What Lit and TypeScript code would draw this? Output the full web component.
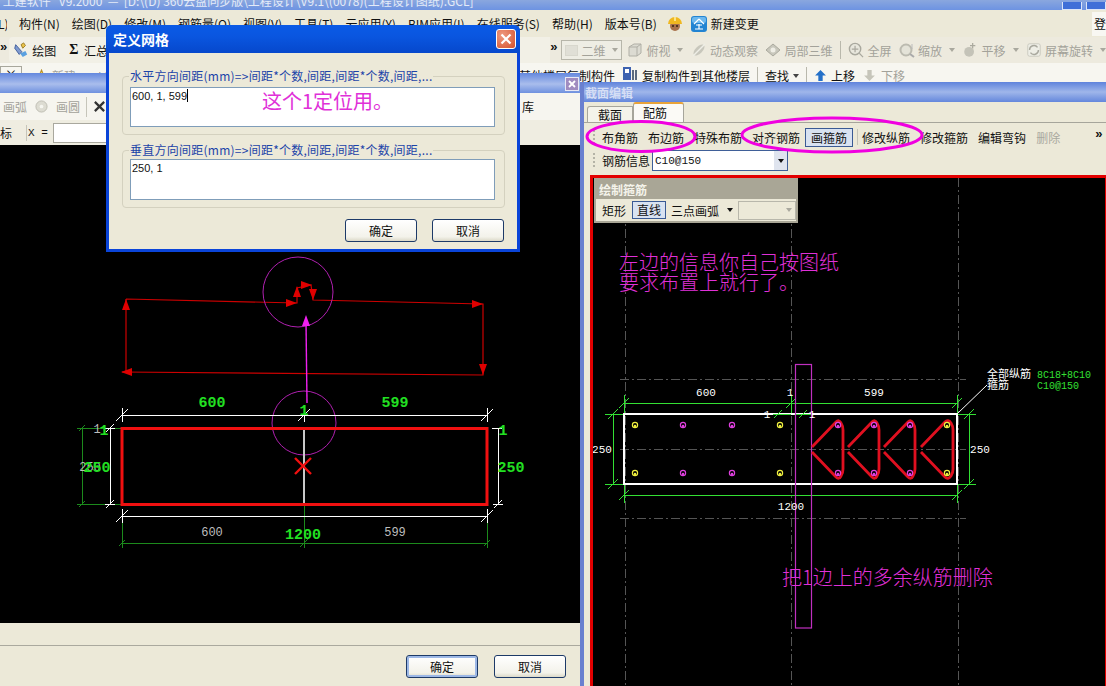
import { LitElement, html, css, svg } from 'lit';
import { customElement } from 'lit/decorators.js';

const arrow = (x: number, y: number, dx: number, dy: number, color: string, len = 11, w = 4) => {
  const bx = x - dx * len;
  const by = y - dy * len;
  return svg`<polygon fill=${color} points="${x},${y} ${bx - dy * w},${by - dx * w} ${bx + dy * w},${by + dx * w}"></polygon>`;
};

// dimension tick: slash plus a short extension line
const tick = (x: number, y: number, color: string, vertical = true, s = 6) => svg`
  <path class="crisp" stroke=${color} fill="none" d="M${x - s} ${y + s}L${x + s} ${y - s} ${vertical ? `M${x} ${y - s - 1}V${y + s + 1}` : `M${x - s - 1} ${y}H${x + s + 1}`}"></path>`;

const rebar = (x: number, y: number, color: string) => svg`
  <circle cx=${x} cy=${y} r="2.6" fill="none" stroke=${color} stroke-width="1.2"></circle>
  <circle cx=${x} cy=${y + 1} r="1.2" fill=${color}></circle>`;

const hoop = (bar: number, right: number) => {
  const t = bar - 26;
  return svg`<path class="hoop" d="M${t} 447L${bar - 2} 422Q${bar + 1} 419 ${right - 2} 423Q${right} 426 ${right} 430V469Q${right} 473 ${right - 2} 476Q${bar + 1} 480 ${bar - 2} 477L${t} 452"></path>`;
};

const ico = {
  draw: html`<svg class="ic" viewBox="0 0 16 18"><path d="M2 3l7 8-3 3-5-7z" fill="#7f9ad0" stroke="#3c5a98"></path><path d="M8 3l3-2 2 3-3 3z" fill="#e8c24a" stroke="#9a7a20"></path><path d="M7 13l6-3 2 4-5 3z" fill="#5aa0e0"></path></svg>`,
  star: html`<svg class="ic sm" viewBox="0 0 12 12"><path d="M6 1l1.5 3.5L11 5 8.4 7.4 9.2 11 6 9 2.8 11l.8-3.6L1 5l3.5-.5z" fill="#f4d25a" stroke="#b8902a"></path></svg>`,
  helmet: html`<svg class="ic" viewBox="0 0 16 16"><circle cx="8" cy="10" r="5" fill="#a8704a"></circle><circle cx="6" cy="10" r="1" fill="#321"></circle><circle cx="10" cy="10" r="1" fill="#321"></circle><path d="M1 8a7 7 0 0 1 14 0z" fill="#f0b820"></path><path d="M7 1h2v4H7z" fill="#fbe38a"></path></svg>`,
  bim: html`<svg class="ic" viewBox="0 0 16 16"><rect width="16" height="16" rx="3" fill="#2284d2"></rect><rect x="1" y="1" width="14" height="6" rx="2" fill="#6cb8ee"></rect><path d="M8 3L3 8M8 3l5 5M5 9h6M8 8v5M4 13h8" stroke="#fff" fill="none" stroke-width="1.2"></path></svg>`,
  cube: html`<svg class="ic" viewBox="0 0 16 16"><path d="M2 5l5-3h7v9l-4 3H2z" fill="#dcdbd2" stroke="#b0afa6"></path><path d="M2 5h8v9M10 5l4-3" fill="none" stroke="#b0afa6"></path></svg>`,
  orbit: html`<svg class="ic" viewBox="0 0 16 16"><ellipse cx="8" cy="8" rx="7" ry="3.5" transform="rotate(-45 8 8)" fill="#c8c7bc"></ellipse><path d="M2 14L14 2" stroke="#eeeee6" stroke-width="1.5"></path></svg>`,
  local: html`<svg class="ic" viewBox="0 0 16 16"><path d="M8 2l7 6-7 6-7-6z" fill="#c8c7bc" stroke="#aaa99e"></path><circle cx="8" cy="8" r="2.5" fill="#efeee6"></circle></svg>`,
  full: html`<svg class="ic" viewBox="0 0 17 17"><circle cx="7.5" cy="7.5" r="6" fill="#e8e7dd" stroke="#a9a89e" stroke-width="1.5"></circle><path d="M7.5 4v7M4 7.5h7M12 12l4 4" stroke="#a9a89e" stroke-width="1.3"></path></svg>`,
  zoom: html`<svg class="ic" viewBox="0 0 16 16"><circle cx="7" cy="8" r="5.5" fill="#e4e3d8" stroke="#bcbbb0" stroke-width="2"></circle><path d="M11 12l4 3" stroke="#aaa" stroke-width="2"></path><path d="M13 2v5" stroke="#bbb"></path></svg>`,
  pan: html`<svg class="ic" viewBox="0 0 16 18"><circle cx="7" cy="11" r="5.5" fill="#c4c3b8"></circle><path d="M11 1v6M8 4h6" stroke="#aaa99e" stroke-width="1.4"></path></svg>`,
  rotate: html`<svg class="ic" viewBox="0 0 18 18"><rect x="2" y="2" width="14" height="14" rx="2" fill="#eeeee6" stroke="#c8c7bc"></rect><path d="M4 9a5 5 0 0 1 9-3M14 9a5 5 0 0 1-9 3" fill="none" stroke="#a9a89e" stroke-width="1.6"></path></svg>`,
  copy: html`<svg class="ic" viewBox="0 0 16 16"><rect x="1" y="1" width="8" height="13" fill="#3d62b0"></rect><rect x="3" y="3" width="4" height="4" fill="#fff"></rect><path d="M11 4v10M14 4v10" stroke="#5b6a80" stroke-width="2"></path></svg>`,
  up: html`<svg class="ic sm" viewBox="0 0 12 12"><path d="M6 1l5 5H8v5H4V6H1z" fill="#2470c8"></path></svg>`,
  down: html`<svg class="ic sm" viewBox="0 0 12 12"><path d="M4 1h4v5h3l-5 5-5-5h3z" fill="#c6c5ba"></path></svg>`,
  radio: html`<svg class="ic sm" viewBox="0 0 14 14"><circle cx="7" cy="7" r="6" fill="#dddcd2" stroke="#bdbcb1"></circle><circle cx="7" cy="7" r="2" fill="#f6f6f0"></circle></svg>`,
  cross: html`<svg class="ic sm" viewBox="0 0 14 14"><path d="M2 2l10 10M12 2L2 12" stroke="#333" stroke-width="2.4"></path></svg>`,
};

const caret = html`<span class="caret"></span>`;

const viewTools = [
  [ico.cube, '俯视', true],
  [ico.orbit, '动态观察', false],
  [ico.local, '局部三维', false],
  null,
  [ico.full, '全屏', false],
  [ico.zoom, '缩放', true],
  [ico.pan, '平移', true],
  [ico.rotate, '屏幕旋转', true],
] as const;

const menus = ['构件(N)', '绘图(D)', '修改(M)', '钢筋量(Q)', '视图(V)', '工具(T)', '云应用(Y)', 'BIM应用(I)', '在线服务(S)', '帮助(H)', '版本号(B)'];

const leftDrawing = svg`
  <g class="thin-red">
    <path d="M126 299L297 303V288L311 285 313 300 483 304V375L122 372M126 372V299"></path>
  </g>
  ${arrow(126, 299, 0, -1, '#e00000')}
  ${arrow(297, 303, 1, 0, '#e00000')}
  ${arrow(297, 286, 0, -1, '#e00000')}
  ${arrow(312, 285, 1, 0, '#e00000')}
  ${arrow(313, 300, 0, 1, '#e00000')}
  ${arrow(483, 304, 1, 0, '#e00000')}
  ${arrow(483, 375, 0, 1, '#e00000')}
  ${arrow(121, 372, -1, 0, '#e00000')}
  <circle class="purple" cx="298" cy="292" r="35"></circle>
  <circle class="purple" cx="304" cy="423" r="32"></circle>
  <path class="pink" d="M307 403L306 322"></path>
  ${arrow(306, 315, 0, -1, '#f020f0')}

  <path class="dark-green crisp" d="M77 428H121M77 504H121M82 428V504M122 516V548M487 516V548M122 543H487M304 504V548"></path>
  ${tick(122, 543, '#1c8a1c', true, 3)}${tick(304, 543, '#1c8a1c', true, 4)}${tick(487, 543, '#1c8a1c', true, 3)}
  ${tick(82, 428, '#1c8a1c', false, 3)}${tick(82, 504, '#1c8a1c', false, 3)}
  <path class="white crisp" d="M122 415H487M122 516H487M110 428V504M498 428V504M105 428H115M492 428H502"></path>
  ${tick(122, 415, '#fff')}${tick(304, 415, '#fff')}${tick(487, 415, '#fff')}
  ${tick(122, 516, '#fff')}${tick(487, 516, '#fff')}
  ${tick(110, 428, '#fff', false, 4)}${tick(110, 504, '#fff', false, 4)}
  ${tick(498, 504, '#fff', false, 4)}
  <path class="gray-bar" d="M304 430V503"></path>
  <rect class="beam" x="122" y="428.5" width="365" height="76"></rect>
  <path class="red-x" d="M295 458L311 474M311 458L295 474"></path>

  <text class="big-g" x="212" y="407" text-anchor="middle">600</text>
  <text class="big-g" x="395" y="407" text-anchor="middle">599</text>
  <text class="big-g" x="304" y="415" text-anchor="middle">1</text>
  <text class="big-g" x="303" y="539" text-anchor="middle">1200</text>
  <text class="small-w" x="212" y="536" text-anchor="middle">600</text>
  <text class="small-w" x="395" y="536" text-anchor="middle">599</text>
  <text class="small-w" x="90" y="471" text-anchor="middle">250</text>
  <text class="big-g" x="97" y="472" text-anchor="middle">250</text>
  <text class="big-g" x="511" y="472" text-anchor="middle">250</text>
  <text class="small-w" x="97" y="433" text-anchor="middle">1</text>
  <text class="big-g" x="104" y="435" text-anchor="middle">1</text>
  <text class="big-g" x="503" y="435" text-anchor="middle">1</text>
`;

const lowerBars = [635, 683, 732, 780];

const rightDrawing = svg`
  <path class="dash" d="M625 178V686M791 178V686M958 178V686M620 379H966M620 449H966M620 518H966"></path>
  <path class="green crisp" d="M624 403H957M624 495H957M613 414V484M969 414V484M605 414H624M605 484H624M957 414H976M957 484H976M624 395V414M957 395V414M791 395V414M624 484V503M957 484V503"></path>
  ${tick(624, 403, '#33e033', true, 5)}${tick(791, 403, '#33e033', true, 5)}${tick(957, 403, '#33e033', true, 5)}
  ${tick(624, 495, '#33e033', true, 5)}${tick(957, 495, '#33e033', true, 5)}
  ${tick(613, 414, '#33e033', false, 5)}${tick(613, 484, '#33e033', false, 5)}
  ${tick(969, 414, '#33e033', false, 5)}${tick(969, 484, '#33e033', false, 5)}
  <rect class="section" x="624" y="414" width="333" height="70"></rect>
  <path class="green crisp" d="M773 414H791M796 414H812"></path>
  ${tick(778, 414, '#33e033', false, 4)}${tick(803, 414, '#33e033', false, 4)}
  <path class="white" d="M957 414L987 385"></path>
  <rect class="marker" x="795.5" y="364.5" width="16" height="263.5"></rect>
  ${lowerBars.map((x, i) => svg`${rebar(x, 425, i === 0 || i === 3 ? '#f0f040' : '#e040e0')}${rebar(x, 473, i === 0 || i === 3 ? '#f0f040' : '#e040e0')}`)}
  ${hoop(838, 843)}${hoop(874, 879)}${hoop(910, 915)}${hoop(947, 953)}
  ${[838, 874, 910].map((x) => svg`${rebar(x, 425, '#e040e0')}${rebar(x, 473, '#e040e0')}`)}
  ${rebar(947, 425, '#f0f040')}${rebar(947, 473, '#f0f040')}
  <text class="dim" x="706" y="396" text-anchor="middle">600</text>
  <text class="dim" x="790" y="396" text-anchor="middle">1</text>
  <text class="dim" x="874" y="396" text-anchor="middle">599</text>
  <text class="dim" x="602" y="453" text-anchor="middle">250</text>
  <text class="dim" x="980" y="453" text-anchor="middle">250</text>
  <text class="dim" x="791" y="510" text-anchor="middle">1200</text>
  <text class="dim" x="767" y="418" text-anchor="middle">1</text>
  <text class="dim" x="812" y="418" text-anchor="middle">1</text>
  <text class="note-w" x="987" y="378">全部纵筋</text>
  <text class="note-w" x="987" y="389">箍筋</text>
  <text class="note-g" x="1037" y="378">8C18+8C10</text>
  <text class="note-g" x="1037" y="389">C10@150</text>
  <text class="hand" x="619" y="270">左边的信息你自己按图纸</text>
  <text class="hand" x="619" y="290">要求布置上就行了。</text>
  <text class="hand" x="782" y="585">把1边上的多余纵筋删除</text>
`;

@customElement('app-root')
export class AppRoot extends LitElement {
  static styles = css`
    :host {
      display: block;
      font-family: "Noto Sans CJK SC", "Liberation Sans", sans-serif;
      font-size: 12px;
      color: #111;
    }
    .screen {
      position: relative;
      width: 1106px;
      height: 686px;
      overflow: hidden;
      background: #ece9d8;
    }
    .ic { width: 16px; height: 16px; flex: none; display: block; }
    .ic.sm { width: 13px; height: 13px; }
    .caret {
      width: 0; height: 0; flex: none; margin-left: 4px;
      border: 3px solid transparent;
      border-top: 4px solid #444;
      border-bottom: 0;
    }
    .muted { color: #a3a29a; }
    .muted .caret { border-top-color: #a9a89e; }

    .apptitle {
      height: 10px;
      overflow: hidden;
      display: flex;
      align-items: flex-end;
      justify-content: space-between;
      background: linear-gradient(#8aa7de, #6d93e2);
      color: #e4ebf8;
      white-space: nowrap;
    }
    .apptitle span { line-height: 16px; margin-bottom: 1px; }
    .winbtns { display: flex; gap: 4px; }
    .winbtns i { display: block; width: 18px; height: 7px; background: #3f6fd8; border: 1px solid #dbe5f8; border-top: 0; }
    .menu {
      height: 27px;
      display: flex;
      align-items: center;
      gap: 12px;
      white-space: nowrap;
    }
    .menu .clip { width: 9px; margin-left: -2px; overflow: hidden; }
    .menu .login {
      margin-left: auto;
      background: #f8f7f2;
      height: 24px;
      width: 14px;
      line-height: 24px;
      text-align: right;
    }
    .menu .tools { display: flex; align-items: center; gap: 8px; margin-left: -2px; }
    .menu .tools span { margin-left: -4px; }
    .row {
      height: 26px;
      display: flex;
      align-items: center;
      white-space: nowrap;
      background: #edeade;
    }
    .more { font-size: 13px; font-weight: 700; line-height: 10px; margin-top: -6px; font-family: "Liberation Sans", sans-serif; }
    .lead { display: flex; align-items: center; gap: 3px; background: #f2f0e6; height: 26px; padding: 0 4px; margin-left: 2px; width: 541px; box-sizing: border-box; border-radius: 4px 0 0 4px; }
    .lead .g { margin-left: 10px; font-weight: 700; font-family: "Liberation Serif", serif; font-size: 14px; }
    .combo2d {
      width: 61px; height: 20px; box-sizing: border-box; margin: 0 5px 0 4px;
      border: 1px solid #b7b6aa; background: #eeede4;
      display: flex; align-items: center; gap: 3px; padding: 0 3px;
    }
    .combo2d b { width: 16px; height: 11px; border: 1px solid #d8d7cd; background: #e0dfd6; box-sizing: border-box; }
    .combo2d span { font-weight: 400; }
    .combo2d .caret { margin-left: 4px; }
    .views { display: flex; align-items: center; gap: 7.5px; }
    .tool { display: flex; align-items: center; gap: 3px; }
    .vsep { width: 1px; height: 18px; background: #b9b8ac; flex: none; }
    .row2 {
      height: 19px;
      display: flex;
      align-items: flex-end;
      white-space: nowrap;
      background: #f7f6f0;
      line-height: 13px;
    }
    .row2 .box { width: 22px; height: 16px; border: 1px solid #a8a79c; box-sizing: border-box; text-align: right; padding-right: 4px; line-height: 13px; }
    .row2 .star { margin-left: 13px; }
    .row2 .new { margin-left: 4px; width: 45px; }
    .row2 .from { width: 108px; margin-left: 398px; }
    .row2 .copy { margin-left: 7px; margin-right: 4px; }
    .row2 .vsep { margin: 0 7px; height: 15px; }
    .row2 .find { display: flex; align-items: center; }
    .row2 .up { margin: 0 4px 0 0; }
    .row2 .down { margin: 0 5px 0 8px; }

    .window { position: absolute; display: flex; flex-direction: column; background: #ece9d8; }
    .left { left: 0; top: 73px; width: 580px; height: 613px; }
    .wintitle {
      height: 20px; flex: none;
      background: linear-gradient(#6488de, #a9bdec 55%, #6f91df);
      position: relative;
    }
    .wclose {
      position: absolute; right: 1px; top: 4px;
      width: 14px; height: 14px; box-sizing: border-box;
      background: #a08cc0; border: 1px solid #e8e8f4;
      display: flex; align-items: center; justify-content: center;
    }
    .lrow1 { height: 27px; flex: none; background: #f6f5ef; display: flex; align-items: center; gap: 8px; padding-left: 3px; white-space: nowrap; }
    .lrow1 .sep { width: 1px; height: 20px; background: #c6c5ba; margin: 0 -2px; }
    .lrow1 .lib { margin-left: auto; margin-right: 46px; }
    .lrow2 { height: 25px; flex: none; background: #efede1; display: flex; align-items: center; white-space: nowrap; }
    .lrow2 .sep { width: 1px; height: 16px; background: #c6c5ba; margin: 0 0 0 14px; }
    .lrow2 .mono { font-family: "Liberation Mono", monospace; font-size: 11px; width: 25px; margin-left: 1px; }
    .lrow2 .input { width: 130px; height: 20px; background: #fff; border: 1px solid #a9a89e; box-sizing: border-box; }
    .cad { flex: 1; background: #000; position: relative; overflow: hidden; min-height: 0; }
    .cad svg { display: block; width: 100%; height: 100%; }
    .foot { height: 63px; flex: none; display: flex; flex-direction: column; }
    .foot .band { height: 22px; border-bottom: 1px solid #aaa99e; box-sizing: content-box; }
    .foot .acts { display: flex; justify-content: flex-end; gap: 16px; padding: 9px 14px 0 0; }
    .xp {
      width: 72px; height: 23px; box-sizing: border-box;
      border: 1px solid #1d3a68; border-radius: 3px;
      background: linear-gradient(#fff, #f3f2ea 80%, #dcd9c8);
      display: flex; align-items: center; justify-content: center;
      font-size: 12px;
    }
    .xp.primary { box-shadow: inset 0 0 0 2px #9db8e6; }

    .right { left: 580px; top: 82px; right: 0; bottom: 0; border-left: 4px solid #6a80cf; }
    .right .wintitle { background: linear-gradient(#5f83dc, #9fb6ea 50%, #6487dc); padding-left: 1px; color: #d5def5; font-weight: 700; line-height: 22px; }
    .tabs { height: 21px; flex: none; display: flex; align-items: flex-end; padding-left: 3px; border-bottom: 1px solid #a6a59b; box-sizing: border-box; }
    .tab { box-sizing: border-box; border: 1px solid #a6a59b; border-bottom: 0; text-align: center; }
    .tab.off { width: 46px; height: 16px; line-height: 15px; border-radius: 3px 0 0 0; background: #f4f3ea; }
    .tab.on { width: 51px; height: 20px; line-height: 17px; background: #fbfaf6; border-top: 2px solid #e8a33a; border-radius: 3px 3px 0 0; padding-right: 7px; }
    .secbar { height: 24px; margin-top: 2px; flex: none; display: flex; align-items: center; gap: 10px; white-space: nowrap; padding-left: 9px; }
    .grip { width: 2px; height: 14px; flex: none; background: repeating-linear-gradient(#b4b3a6 0 2px, transparent 2px 4px); }
    .secbar .start { margin-left: -3px; }
    .active { padding: 0 5px; height: 19px; line-height: 17px; box-sizing: border-box; border: 1px solid #3a5a94; background: #d8e2f1; margin-left: -5px; }
    .secbar .sep { width: 1px; height: 16px; background: #c5c4b8; margin: 0 -6px; }
    .secbar .more { margin-left: 25px; }
    .secbar .off { color: #a9a89e; }
    .inforow { height: 22px; margin-top: 1px; flex: none; display: flex; align-items: flex-start; padding-left: 9px; gap: 7px; }
    .inforow .grip { margin-top: 3px; }
    .inforow .lbl { line-height: 21px; }
    .combo {
      width: 136px; height: 21px; box-sizing: border-box; margin-left: -5px;
      border: 1px solid #3f5f98; background: #fff;
      display: flex; align-items: center; justify-content: space-between;
      font-family: "Liberation Mono", monospace; font-size: 11px; padding-left: 2px;
    }
    .combo b { width: 13px; height: 19px; background: #dfe4ee; display: flex; align-items: center; justify-content: center; }
    .combo .caret { margin: 0; border-top-color: #111; }
    .secwrap { flex: 1; min-height: 0; margin: 3px 0 0 6px; position: relative; background: #000; border-top: 3px solid #e30000; border-left: 3px solid #e30000; border-right: 1px solid #e30000; box-sizing: content-box; }
    .secwrap svg { display: block; width: 512px; height: 508px; }

    .float {
      position: absolute; left: 1px; top: 0;
      width: 204px; height: 45px; box-sizing: border-box;
      border: 2px solid #a9a696; background: #ece9d8;
      white-space: nowrap;
    }
    .float header { height: 19px; background: #a9a696; color: #f4f3ea; font-weight: 700; line-height: 20px; padding-left: 3px; }
    .float div { display: flex; align-items: center; height: 22px; padding-left: 6px; }
    .float span { flex: none; }
    .float .cur { width: 34px; height: 18px; line-height: 16px; box-sizing: border-box; text-align: center; border: 1px solid #3a5a94; background: #d8e2f1; margin: 0 5px 0 6px; }
    .float .caret { margin: 0 5px 0 8px; border-top-color: #111; }
    .float .dis { width: 58px; height: 19px; box-sizing: border-box; border: 1px solid #b8b7ab; display: flex; justify-content: flex-end; align-items: center; padding: 0 3px 0 0; }
    .float .dis .caret { margin: 0; border-top-color: #a9a89e; }

    text { font-family: "Liberation Mono", "Noto Sans CJK SC", monospace; }
    .crisp { shape-rendering: crispEdges; }
    .thin-red path { fill: none; stroke: #cc0000; stroke-width: 1.2; }
    .purple { fill: none; stroke: #b020b0; stroke-width: 1; }
    .pink { fill: none; stroke: #f020f0; stroke-width: 1.4; }
    .dark-green { fill: none; stroke: #1c8a1c; stroke-width: 1; }
    .white { fill: none; stroke: #fff; stroke-width: 1; }
    .gray-bar { fill: none; stroke: #c8c8c8; stroke-width: 2; }
    .beam { fill: none; stroke: #f01010; stroke-width: 3; }
    .red-x { fill: none; stroke: #f01010; stroke-width: 2.4; }
    .big-g { fill: #22e022; font-size: 15px; font-weight: 700; }
    .small-w { fill: #bdbdbd; font-size: 12px; }
    .dash { fill: none; stroke: #555; stroke-dasharray: 9 3 2 3; shape-rendering: crispEdges; }
    .green { fill: none; stroke: #33e033; stroke-width: 1; }
    .section { fill: none; stroke: #fff; stroke-width: 2; }
    .marker { fill: none; stroke: #c030c0; stroke-width: 1.2; }
    .hoop { fill: none; stroke: #e01020; stroke-width: 2.8; }
    .dim { fill: #fff; font-size: 11px; }
    .note-w { fill: #fff; font-size: 11px; font-family: "Noto Sans CJK SC", sans-serif; }
    .note-g { fill: #33e033; font-size: 10px; }
    .hand { fill: #e030d8; font-size: 20px; font-family: "Noto Sans CJK SC", sans-serif; font-weight: 300; }

    .dialog {
      position: absolute; left: 106px; top: 25px; width: 414px; height: 227px;
      box-sizing: border-box;
      border: 3px solid #0a44d8; border-top: 0; border-radius: 6px 6px 0 0;
      background: #ece9d8;
      display: flex; flex-direction: column;
    }
    .dialog .dtitle {
      height: 28px; flex: none; margin: 0 -3px;
      background: linear-gradient(#0a5ae6, #0a56e0 40%, #0648cc);
      border-radius: 6px 6px 0 0;
      color: #fff; font-weight: 700; font-size: 14px;
      display: flex; align-items: center; justify-content: space-between;
      padding: 0 4px 0 7px;
    }
    .dclose {
      width: 20px; height: 20px; box-sizing: border-box; border: 1px solid #fff; border-radius: 3px;
      background: radial-gradient(circle at 30% 30%, #ee9a80, #d6512c);
      display: flex; align-items: center; justify-content: center;
    }
    .dbody { padding: 15px 12px 0 13px; display: flex; flex-direction: column; }
    fieldset { margin: 0 0 7px; padding: 3px 9px 7px 7px; border: 1px solid #d4d1bf; border-radius: 4px; min-width: 0; }
    fieldset.second { padding-top: 1px; }
    legend { padding: 0 1px; margin-left: -1px; color: #1c44a8; font-size: 12px; line-height: 16px; letter-spacing: 0.25px; white-space: nowrap; }
    .field { height: 40px; box-sizing: border-box; background: #fff; border: 1px solid #7f9db9; padding: 0 1px; font-family: "Liberation Sans", sans-serif; font-size: 11px; line-height: 16px; display: flex; align-items: flex-start; }
    .second .field { height: 41px; }
    .caretbar { width: 1px; height: 13px; background: #000; margin: 1px 0 0 0; }
    .dacts { display: flex; justify-content: flex-end; gap: 15px; margin-top: 4px; padding-right: 1px; }
    .stamp {
      position: absolute; left: 153px; top: 63px;
      color: #e030d8; font-size: 20px; line-height: 26px;
      white-space: nowrap;
    }

    .rings { position: absolute; left: 0; top: 0; width: 1106px; height: 686px; pointer-events: none; }
    .rings ellipse { fill: none; stroke: #f000e0; stroke-width: 3; }
  `;

  render() {
    return html`
      <div class="screen">
        <div class="apptitle">
          <span>&nbsp;土建软件&nbsp;&nbsp;&nbsp;V9.2000&nbsp;&nbsp;—&nbsp;&nbsp;[D:\\(D) 360云盘同步版\\工程设计\\V9.1\\(0078)(工程设计图纸).GCL]</span>
          <div class="winbtns"><i></i><i></i></div>
        </div>
        <div class="menu">
          <span class="clip">L)</span>
          ${menus.map((m) => html`<span>${m}</span>`)}
          <div class="tools">${ico.helmet}${ico.bim}<span>新建变更</span></div>
          <span class="login">登</span>
        </div>
        <div class="row">
          <span class="more">»</span>
          <div class="lead">${ico.draw}<span>绘图</span><span class="g">Σ</span><span>&nbsp;汇总计算</span></div>
          <span class="more">»</span>
          <div class="combo2d muted"><b></b><span>二维</span>${caret}</div>
          <div class="views muted">
            ${viewTools.map((t) =>
              t
                ? html`<div class="tool">${t[0]}<span>${t[1]}</span>${t[2] ? caret : ''}</div>`
                : html`<span class="vsep"></span>`
            )}
          </div>
        </div>
        <div class="row2">
          <span class="box">×</span>
          <span class="star">${ico.star}</span>
          <span class="new muted">新建</span>
          <span>×</span>
          <span class="from">从其他楼层复制构件</span>
          <span class="copy">${ico.copy}</span>
          <span>复制构件到其他楼层</span>
          <span class="vsep"></span>
          <span class="find">查找${caret}</span>
          <span class="vsep"></span>
          <span class="up">${ico.up}</span>
          <span>上移</span>
          <span class="down">${ico.down}</span>
          <span class="muted">下移</span>
        </div>

        <section class="window left">
          <div class="wintitle">
            <span class="wclose"><svg width="8" height="8" viewBox="0 0 8 8"><path d="M1 1l6 6M7 1L1 7" stroke="#fff" stroke-width="1.8"></path></svg></span>
          </div>
          <div class="lrow1">
            <span class="muted">画弧</span>${ico.radio}
            <span class="muted">画圆</span><span class="sep"></span>${ico.cross}
            <span class="lib">库</span>
          </div>
          <div class="lrow2">
            <span>标</span><span class="sep"></span><span class="mono">X =</span><span class="input"></span>
          </div>
          <div class="cad">
            <svg viewBox="0 145 580 478">${leftDrawing}</svg>
          </div>
          <div class="foot">
            <div class="band"></div>
            <div class="acts">
              <span class="xp primary">确定</span>
              <span class="xp">取消</span>
            </div>
          </div>
        </section>

        <section class="window right">
          <div class="wintitle">截面编辑</div>
          <div class="tabs">
            <span class="tab off">截面</span>
            <span class="tab on">配筋</span>
          </div>
          <div class="secbar">
            <span class="grip"></span>
            <span class="start">布角筋</span>
            <span>布边筋</span>
            <span>特殊布筋</span>
            <span>对齐钢筋</span>
            <span class="active">画箍筋</span>
            <span class="sep"></span>
            <span>修改纵筋</span>
            <span>修改箍筋</span>
            <span>编辑弯钩</span>
            <span class="off">删除</span>
            <span class="more">»</span>
          </div>
          <div class="inforow">
            <span class="grip"></span>
            <span class="lbl">钢筋信息</span>
            <div class="combo">C10@150<b>${caret}</b></div>
          </div>
          <div class="secwrap">
            <svg viewBox="593 178 512 508">${rightDrawing}</svg>
            <div class="float">
              <header>绘制箍筋</header>
              <div>
                <span>矩形</span>
                <span class="cur">直线</span>
                <span>三点画弧</span>
                ${caret}
                <span class="dis">${caret}</span>
              </div>
            </div>
          </div>
        </section>

        <svg class="rings" viewBox="0 0 1106 686">
          <ellipse cx="641" cy="136.5" rx="54" ry="15"></ellipse>
          <ellipse cx="832" cy="135" rx="90" ry="17"></ellipse>
        </svg>

        <section class="dialog">
          <div class="dtitle">
            <span>定义网格</span>
            <span class="dclose"><svg width="12" height="12" viewBox="0 0 12 12"><path d="M1.5 1.5l9 9M10.5 1.5l-9 9" stroke="#fff" stroke-width="2.2"></path></svg></span>
          </div>
          <div class="dbody">
            <fieldset>
              <legend>水平方向间距(mm)=>间距*个数,间距,间距*个数,间距,...</legend>
              <div class="field">600, 1, 599<span class="caretbar"></span></div>
            </fieldset>
            <fieldset class="second">
              <legend>垂直方向间距(mm)=>间距*个数,间距,间距*个数,间距,...</legend>
              <div class="field">250, 1</div>
            </fieldset>
            <div class="dacts">
              <span class="xp">确定</span>
              <span class="xp">取消</span>
            </div>
          </div>
          <span class="stamp">这个1定位用。</span>
        </section>
      </div>
    `;
  }
}
